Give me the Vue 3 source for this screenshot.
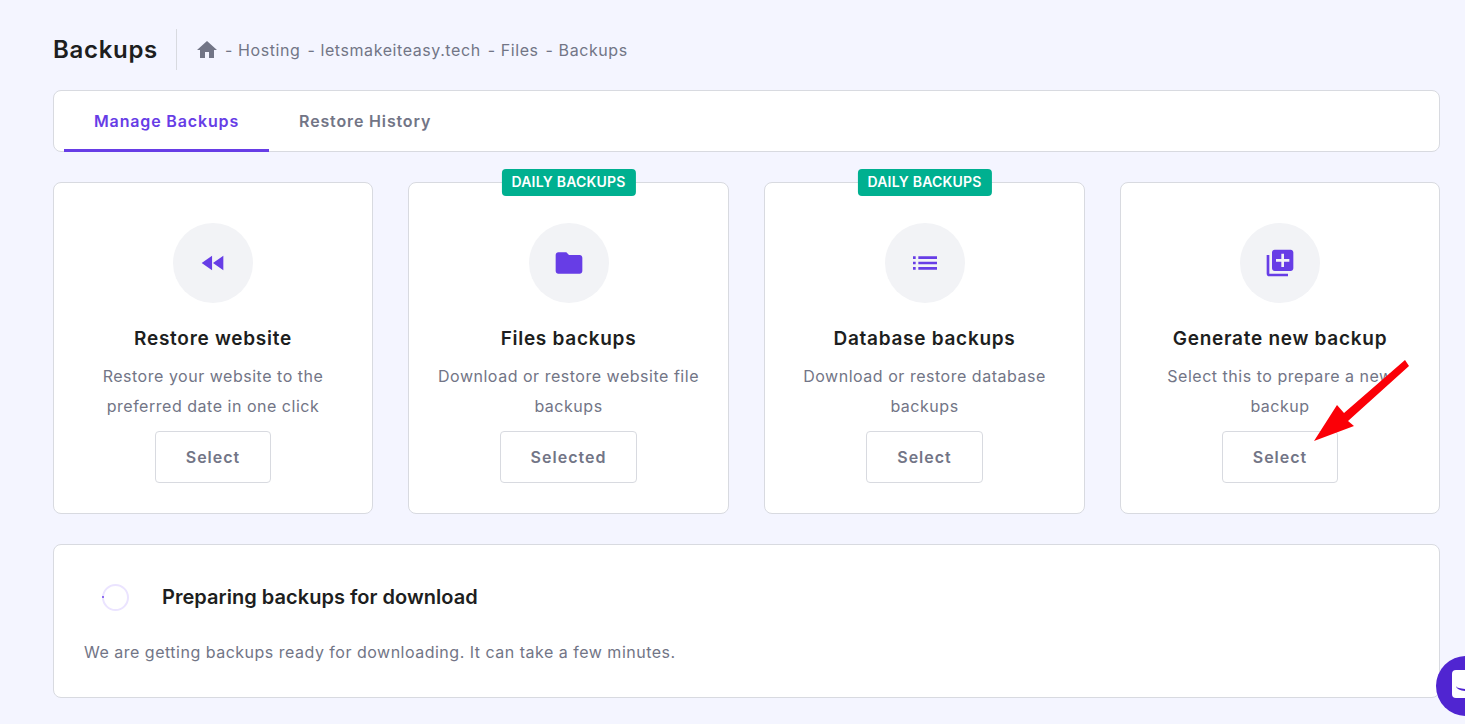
<script setup>
const cards = [
  { title: 'Restore website', text: 'Restore your website to the preferred date in one click', button: 'Select', icon: 'rewind' },
  { title: 'Files backups', text: 'Download or restore website file backups', button: 'Selected', icon: 'folder', badge: true },
  { title: 'Database backups', text: 'Download or restore database backups', button: 'Select', icon: 'list', badge: true },
  { title: 'Generate new backup', text: 'Select this to prepare a new backup', button: 'Select', icon: 'add' }
]
const crumbs = ['Hosting', 'letsmakeiteasy.tech', 'Files', 'Backups']
</script>

<template>
  <div class="page">
    <header class="page-header">
      <h1>Backups</h1>
      <nav class="crumbs">
        <svg class="home" viewBox="0 0 24 24" width="24" height="24">
          <path d="M10 20v-6h4v6h5v-8h3L12 3 2 12h3v8z" />
        </svg>
        <span v-for="crumb in crumbs" :key="crumb" class="crumb">- {{ crumb }}</span>
      </nav>
    </header>

    <div class="tabs">
      <div class="tab active">Manage Backups</div>
      <div class="tab">Restore History</div>
    </div>

    <div class="cards">
      <div v-for="card in cards" :key="card.title" class="card">
        <span v-if="card.badge" class="badge">DAILY BACKUPS</span>
        <div class="icon-circle">
          <svg viewBox="0 0 24 24" width="32" height="32">
            <path v-if="card.icon === 'rewind'" d="M11.3 17.5V6.5L3.5 12l7.8 5.5zm.7-5.5l7.75 5.5V6.5L12 12z" />
            <path v-else-if="card.icon === 'folder'" d="M10 4H4c-1.1 0-2 .9-2 2v12c0 1.1.9 2 2 2h16c1.1 0 2-.9 2-2V8c0-1.1-.9-2-2-2h-8l-2-2z" />
            <path v-else-if="card.icon === 'list'" d="M3 13h2v-2H3v2zm0 4h2v-2H3v2zm0-8h2V7H3v2zm4 4h14v-2H7v2zm0 4h14v-2H7v2zM7 7v2h14V7H7z" />
            <path v-else d="M4 6H2v14c0 1.1.9 2 2 2h14v-2H4V6zm16-4H8c-1.1 0-2 .9-2 2v12c0 1.1.9 2 2 2h12c1.1 0 2-.9 2-2V4c0-1.1-.9-2-2-2zm-1 9h-4v4h-2v-4H9V9h4V5h2v4h4v2z" />
          </svg>
        </div>
        <h3>{{ card.title }}</h3>
        <p>{{ card.text }}</p>
        <button class="select-btn">{{ card.button }}</button>
      </div>
    </div>

    <section class="panel">
      <div class="panel-head">
        <span class="spinner"></span>
        <h2>Preparing backups for download</h2>
      </div>
      <p>We are getting backups ready for downloading. It can take a few minutes.</p>
    </section>

    <!-- red annotation arrow drawn over the last card -->
    <svg class="arrow" viewBox="0 0 110 90" width="110" height="90">
      <path d="M95 3 L99 9 L38 64 L44 69 L4 84 L27 48 L34 56 Z" fill="#fb0007" />
    </svg>

    <div class="chat">
      <span class="chat-bubble"><span class="chat-smile"></span></span>
    </div>
  </div>
</template>

<style scoped>
.page {
  position: relative;
  box-sizing: border-box;
  height: 724px;
  overflow: hidden;
  padding: 29px 25px 0 53px;
  background: #f4f5ff;
  font-family: Inter, "Noto Sans", sans-serif;
  color: #1d1e20;
}

.page-header {
  display: flex;
  align-items: center;
  height: 41px;
}

h1 {
  margin: 0;
  padding-right: 18px;
  height: 41px;
  line-height: 41px;
  font-size: 24px;
  font-weight: 600;
  letter-spacing: 0.7px;
  border-right: 1px solid #d8dae0;
}

.crumbs {
  display: flex;
  align-items: center;
  padding-left: 18px;
  font-size: 16px;
  color: #727586;
  letter-spacing: 0.58px;
}

.home {
  fill: #727586;
  margin-right: 6px;
}

.crumb {
  margin-right: 7px;
}

.tabs {
  display: flex;
  height: 60px;
  margin-top: 20px;
  padding-left: 10px;
  background: #fff;
  border: 1px solid #d8dae0;
  border-radius: 8px;
}

.tab {
  padding: 0 30px;
  line-height: 60px;
  font-size: 16px;
  font-weight: 600;
  color: #727586;
  letter-spacing: 0.85px;
}

.tab.active {
  color: #673de6;
  border-bottom: 3px solid #673de6;
  height: 58px;
  margin-bottom: -1px;
}

.cards {
  display: grid;
  grid-template-columns: 320px 321px 321px 320px;
  gap: 35px;
  margin-top: 30px;
}

.card {
  position: relative;
  box-sizing: border-box;
  height: 332px;
  padding: 40px 25px 0;
  display: flex;
  flex-direction: column;
  align-items: center;
  background: #fff;
  border: 1px solid #d8dae0;
  border-radius: 8px;
  text-align: center;
}

.badge {
  position: absolute;
  top: -14px;
  left: 50%;
  transform: translateX(-50%);
  padding: 0 10px;
  height: 27px;
  line-height: 26px;
  background: #00b090;
  border-radius: 4px;
  color: #fff;
  font-size: 14px;
  font-weight: 600;
  letter-spacing: 0.2px;
  white-space: nowrap;
}

.icon-circle {
  display: flex;
  align-items: center;
  justify-content: center;
  width: 80px;
  height: 80px;
  border-radius: 50%;
  background: #f2f3f6;
}

.icon-circle svg {
  fill: #673de6;
}

.card h3 {
  margin: 23px 0 0;
  font-size: 19px;
  line-height: 26px;
  font-weight: 600;
  letter-spacing: 0.72px;
}

.card p {
  margin: 9px 0 0;
  font-size: 16px;
  line-height: 30px;
  color: #727586;
  letter-spacing: 0.52px;
}

.select-btn {
  box-sizing: border-box;
  height: 52px;
  margin-top: 10px;
  padding: 0 30px;
  background: #fff;
  border: 1px solid #d8dae0;
  border-radius: 4px;
  font-family: inherit;
  font-size: 16px;
  font-weight: 600;
  color: #727586;
  letter-spacing: 1px;
}

.panel {
  box-sizing: border-box;
  height: 154px;
  margin-top: 30px;
  padding: 30px 30px 0;
  background: #fff;
  border: 1px solid #d8dae0;
  border-radius: 8px;
}

.panel-head {
  display: flex;
  align-items: center;
  height: 44px;
}

.spinner {
  position: relative;
  box-sizing: border-box;
  width: 27px;
  height: 27px;
  margin-left: 18px;
  border: 2px solid #ebe4ff;
  border-radius: 50%;
}

.spinner::after {
  content: "";
  position: absolute;
  left: -2px;
  top: 10px;
  width: 2px;
  height: 2px;
  background: #8f6ff0;
}

.panel h2 {
  margin: 0 0 0 33px;
  font-size: 20px;
  font-weight: 600;
  letter-spacing: 0.03px;
}

.panel p {
  margin: 21px 0 0;
  font-size: 16px;
  line-height: 24px;
  color: #727586;
  letter-spacing: 0.5px;
}

.arrow {
  position: absolute;
  left: 1310px;
  top: 357px;
}

.chat {
  position: absolute;
  left: 1436px;
  top: 656px;
  width: 60px;
  height: 60px;
  border-radius: 50%;
  background: #5025d1;
}

.chat-bubble {
  position: absolute;
  left: 16px;
  top: 14px;
  width: 28px;
  height: 28px;
  border-radius: 4px;
  background: #fff;
}

.chat-smile {
  position: absolute;
  left: 4px;
  top: 11px;
  width: 20px;
  height: 8px;
  border-bottom: 2px solid #5025d1;
  border-radius: 50%;
}
</style>

<style>
html, body {
  margin: 0;
  background: #f4f5ff;
}
</style>
